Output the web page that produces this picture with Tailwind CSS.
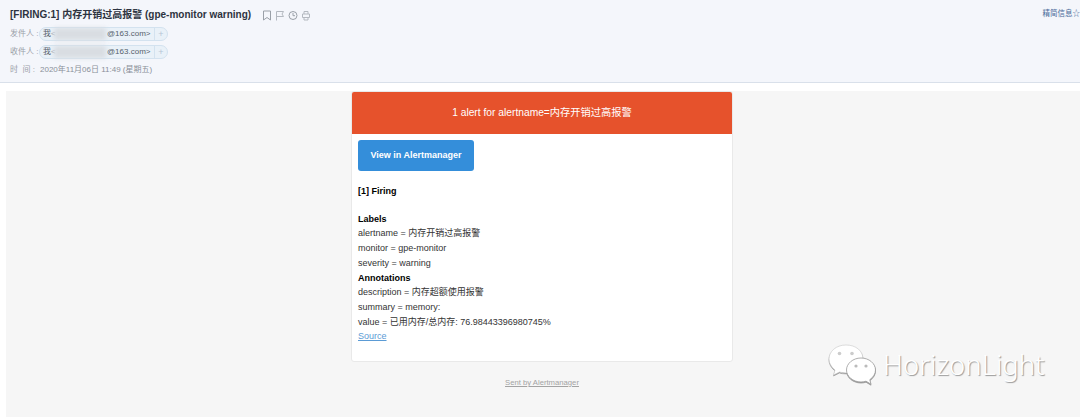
<!DOCTYPE html>
<html lang="zh">
<head>
  <meta charset="UTF-8">
  <title>[FIRING:1] 内存开销过高报警</title>
  <script src="https://cdn.jsdelivr.net/npm/@tailwindcss/browser@4"></script>
</head>
<body class="bg-white h-[417px] overflow-hidden font-['Liberation_Sans','Noto_Sans_CJK_SC',sans-serif]">
  <!-- mail header -->
  <header class="h-[83px] bg-[#f4f6fb] border-b border-[#d9e0ea] pl-[10px] pt-[7px] flex justify-between">
    <div>
      <div class="flex items-center h-[16px]">
        <h1 class="text-[10px] font-bold text-[#2d3340] leading-[16px]">[FIRING:1] 内存开销过高报警 (gpe-monitor warning)</h1>
        <div class="flex items-center gap-[3px] ml-[11px] text-[#9aa0a8]">
          <svg class="w-[10px] h-[11px]" viewBox="0 0 10 11" fill="none" stroke="currentColor"><path d="M1.500 1h7v9L5 7.500 1.500 10z"/></svg>
          <svg class="w-[10px] h-[11px]" viewBox="0 0 10 11" fill="none" stroke="#b4b9c0"><path d="M1.500 10.500V1.500h7l-1.500 2.500 1.500 2.500h-7"/></svg>
          <svg class="w-[10px] h-[11px]" viewBox="0 0 10 11" fill="none" stroke="currentColor"><circle cx="5" cy="5.500" r="4"/><path d="M5 3v2.700h2"/></svg>
          <svg class="w-[10px] h-[11px]" viewBox="0 0 10 11" fill="none" stroke="#b4b9c0"><path d="M3 4V1.500h4V4M1.500 4h7v3.500h-7zM3 7.500h4V10H3z"/></svg>
        </div>
      </div>
      <div class="flex items-center h-[18px] mt-[2px] text-[8px] text-[#9aa0a8]">
        <span class="w-[29px] whitespace-nowrap">发件人 :</span>
        <div class="flex items-center h-[14px] rounded-full border border-[#d3e2ef] bg-[#e9f1f8] text-[#555e6b]">
          <span class="pl-[3px] w-[114px] flex items-center relative">我<span class="text-[#9aa0a8]">&lt;</span>
            <span class="absolute left-[14px] w-[52px] h-[12px] bg-[#d9dde2] blur-[2px]"></span>
            <span class="absolute left-[67px]">@163.com&gt;</span>
          </span>
          <span class="w-[13px] border-l border-[#d3e2ef] text-center text-[9px] leading-[12px] text-[#b5c5d5]">+</span>
        </div>
      </div>
      <div class="flex items-center h-[18px] text-[8px] text-[#9aa0a8]">
        <span class="w-[29px] whitespace-nowrap">收件人 :</span>
        <div class="flex items-center h-[14px] rounded-full border border-[#d3e2ef] bg-[#e9f1f8] text-[#555e6b]">
          <span class="pl-[3px] w-[114px] flex items-center relative">我<span class="text-[#9aa0a8]">&lt;</span>
            <span class="absolute left-[14px] w-[52px] h-[12px] bg-[#d9dde2] blur-[2px]"></span>
            <span class="absolute left-[67px]">@163.com&gt;</span>
          </span>
          <span class="w-[13px] border-l border-[#d3e2ef] text-center text-[9px] leading-[12px] text-[#b5c5d5]">+</span>
        </div>
      </div>
      <div class="flex items-center h-[18px] text-[8px] text-[#9aa0a8]">
        <span class="w-[30px] whitespace-nowrap">时&nbsp;&nbsp;间 :</span>
        <span class="text-[#8a9099]">2020年11月06日 11:49 (星期五)</span>
      </div>
    </div>
    <a class="text-[7.500px] text-[#4a6a9a] leading-[12px] mt-[1px] whitespace-nowrap">精简信息☆</a>
  </header>

  <!-- mail body -->
  <main class="mt-[8px] ml-[6px] h-[326px] bg-[#f6f6f6] pr-[2px] flex flex-col items-center">
    <div class="w-[382px] h-[271px] bg-white border border-[#e9e9e9] rounded-[3px] overflow-hidden">
      <div class="h-[42px] bg-[#e6522c] text-white text-[10.250px] flex items-center justify-center">1 alert for alertname=内存开销过高报警</div>
      <div class="px-[6px] pt-[6px] text-[9px] leading-[14.700px] text-[#333]">
        <a class="w-[116px] h-[31px] rounded-[3px] bg-[#348eda] text-white font-bold flex items-center justify-center">View in Alertmanager</a>
        <p class="mt-[13px] font-bold text-black">[1] Firing</p>
        <p class="mt-[13px] font-bold text-black">Labels</p>
        <p>alertname = 内存开销过高报警</p>
        <p>monitor = gpe-monitor</p>
        <p>severity = warning</p>
        <p class="font-bold text-black">Annotations</p>
        <p>description = 内存超额使用报警</p>
        <p>summary = memory:</p>
        <p>value = 已用内存/总内存: 76.98443396980745%</p>
        <a class="underline text-[#5b9bd5]">Source</a>
      </div>
    </div>
    <a class="mt-[15px] text-[7.700px] leading-[12px] text-[#a3a3a3] underline">Sent by Alertmanager</a>
  </main>

  <!-- watermark -->
  <div class="absolute left-[828px] top-[344px] flex items-center text-white">
    <svg class="w-[50px] h-[42px] drop-shadow-[0_1px_0_#999]" viewBox="0 0 50 42">
      <path fill="#fff" stroke="#c8c8c8" stroke-width=".6" d="M18 1C8 1 1 7.500 1 15c0 4.500 2.500 8 6 11l-1.500 5 6-3c2 .6 4 .9 6.500 .9 8 0 17-6 17-14C35 7 28 1 18 1z"/>
      <path fill="#fff" stroke="#999" stroke-width=".8" d="M33 14c-8 0-14.500 5.500-14.500 12S25 38 33 38c1.800 0 3.500-.3 5-.8l5 3-1.200-4.500c3.500-2.500 5.700-5.800 5.700-9.700C47.500 19.500 41 14 33 14z"/>
      <circle cx="11.500" cy="9.500" r="1.800" fill="#ccc"/><circle cx="24" cy="9.500" r="1.800" fill="#ccc"/>
      <circle cx="28" cy="22" r="1.600" fill="#bbb"/><circle cx="38" cy="22" r="1.600" fill="#bbb"/>
    </svg>
    <span class="ml-[5px] text-[27.500px] font-['Noto_Sans',sans-serif] font-light leading-none [text-shadow:1px_1px_1px_#999]">HorizonLight</span>
  </div>
</body>
</html>
